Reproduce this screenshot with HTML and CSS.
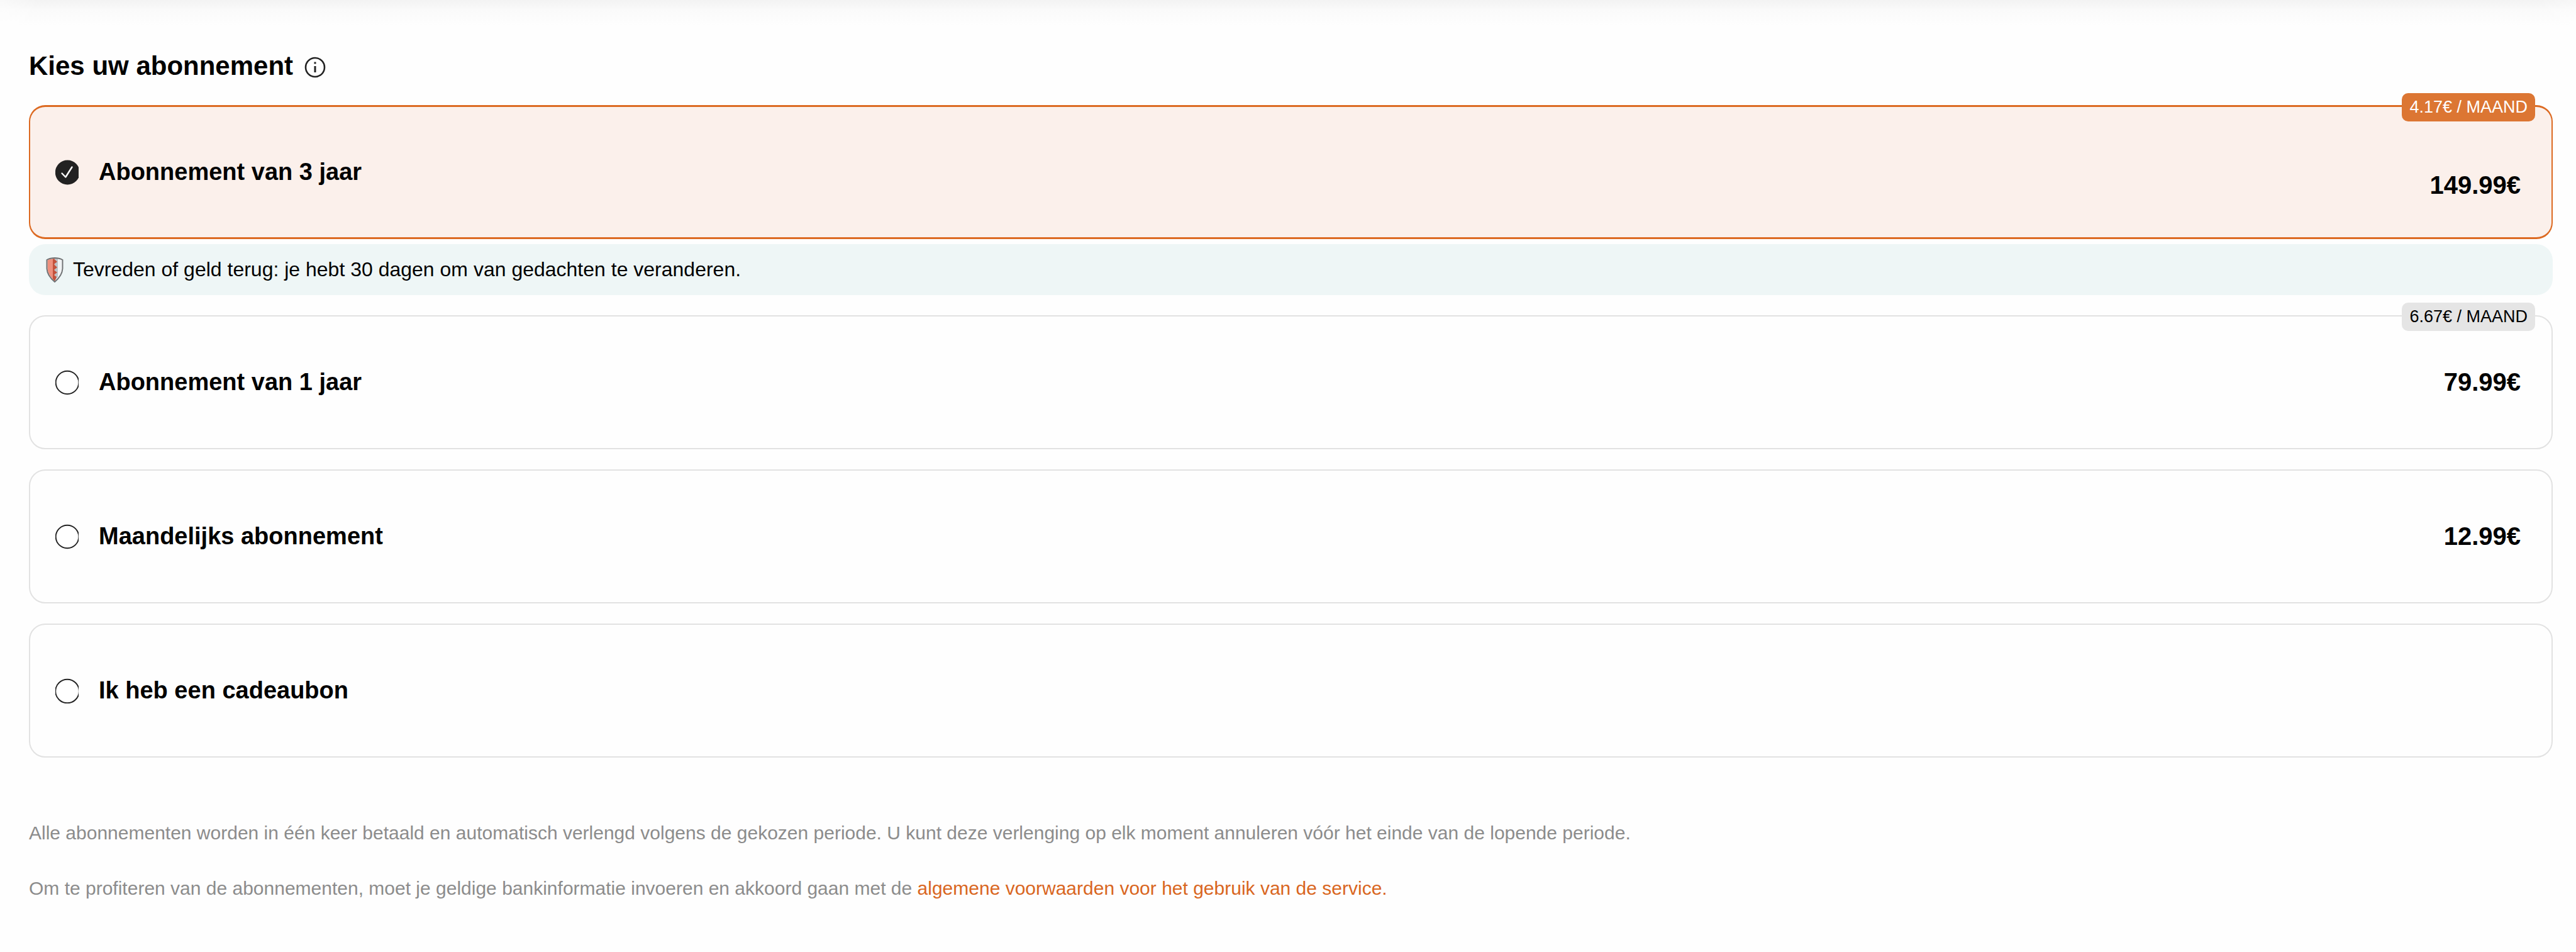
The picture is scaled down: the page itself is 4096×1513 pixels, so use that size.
FILE: index.html
```html
<!DOCTYPE html>
<html lang="nl">
<head>
<meta charset="utf-8">
<meta name="viewport" content="width=device-width, initial-scale=1">
<title>Kies uw abonnement</title>
<link rel="stylesheet" href="styles.css">
</head>
<body>
<div class="header-shadow"></div>
<main class="page">
  <div class="heading">
    <h1 class="heading-title">Kies uw abonnement</h1>
    <button class="info" type="button" aria-label="Meer informatie">
      <svg class="info-icon" viewBox="0 0 34 34" aria-hidden="true"><circle cx="17" cy="17" r="15" fill="none" stroke="#222" stroke-width="2.6"/><path d="M17 15v10" stroke="#222" stroke-width="3"/><path d="M17 8.500v3" stroke="#222" stroke-width="3"/></svg>
    </button>
  </div>

  <form class="plans">
    <div class="plan-group">
      <label class="plan plan-selected">
        <span class="radio"><input class="radio-input" type="radio" name="plan" checked><svg class="radio-icon" viewBox="0 0 37 40" aria-hidden="true"><circle cx="19.300" cy="20" r="19.500" fill="#222"/><path d="M10.500 21.500l5.800 6L26.500 11.500" fill="none" stroke="#fff" stroke-width="2.400" stroke-linecap="round" stroke-linejoin="round"/></svg></span>
        <span class="plan-name">Abonnement van 3 jaar</span>
        <span class="price price-low">149.99€</span>
        <span class="badge badge-accent">4.17€ / MAAND</span>
      </label>
      <p class="note">
        <svg class="shield" viewBox="0 0 28 40" aria-hidden="true"><path d="M14 1C18 1 23 2 26.500 4V18C26 27 20 34 14 39C8 34 2 27 1.500 18V4C5 2 10 1 14 1Z" fill="#f1f3f4"/><path d="M14 2H19V31L14 37Z" fill="#bcc2c6"/><path d="M14 2C9 2 5 3 2.500 4.500V18C3 26 8 32 14 37.500Z" fill="#ee8f7c"/><path d="M11 2.500H13L18 7L12.500 11L18 16L12.500 20L18 24L12.500 28L17 31L14 38L11 34Z" fill="#c4513b"/><path d="M14 1C18 1 23 2 26.500 4V18C26 27 20 34 14 39C8 34 2 27 1.500 18V4C5 2 10 1 14 1Z" fill="none" stroke="#6e7072" stroke-width="1.900"/></svg>
        <span>Tevreden of geld terug: je hebt 30 dagen om van gedachten te veranderen.</span>
      </p>
    </div>
    <label class="plan">
      <span class="radio"><input class="radio-input" type="radio" name="plan"><svg class="radio-icon" viewBox="0 0 37 40" aria-hidden="true"><circle cx="19" cy="20" r="18.300" fill="#fff" stroke="#222" stroke-width="1.900"/></svg></span>
      <span class="plan-name">Abonnement van 1 jaar</span>
      <span class="price">79.99€</span>
      <span class="badge">6.67€ / MAAND</span>
    </label>
    <label class="plan">
      <span class="radio"><input class="radio-input" type="radio" name="plan"><svg class="radio-icon" viewBox="0 0 37 40" aria-hidden="true"><circle cx="19" cy="20" r="18.300" fill="#fff" stroke="#222" stroke-width="1.900"/></svg></span>
      <span class="plan-name">Maandelijks abonnement</span>
      <span class="price">12.99€</span>
    </label>
    <label class="plan">
      <span class="radio"><input class="radio-input" type="radio" name="plan"><svg class="radio-icon" viewBox="0 0 37 40" aria-hidden="true"><circle cx="19" cy="20.500" r="18.800" fill="#fff" stroke="#222" stroke-width="1.900"/></svg></span>
      <span class="plan-name">Ik heb een cadeaubon</span>
    </label>
  </form>

  <footer class="legal">
    <p class="legal-text">Alle abonnementen worden in één keer betaald en automatisch verlengd volgens de gekozen periode. U kunt deze verlenging op elk moment annuleren vóór het einde van de lopende periode.</p>
    <p class="legal-text">Om te profiteren van de abonnementen, moet je geldige bankinformatie invoeren en akkoord gaan met de <a class="legal-link" href="#voorwaarden">algemene voorwaarden voor het gebruik van de service.</a></p>
  </footer>
</main>
</body>
</html>
```
FILE: styles.css
```css
* { box-sizing: border-box; }

body {
  margin: 0;
  background: #fefefe;
  color: #000;
  font-family: "Liberation Sans", Arial, Helvetica, sans-serif;
}

.header-shadow {
  height: 40px;
  background: linear-gradient(#f3f3f3, #fafafa 40%, #fefefe);
  mask-image: linear-gradient(to right, rgb(0 0 0 / 50%), #000 60px, #000 calc(100% - 60px), rgb(0 0 0 / 70%));
}

.page { padding: 35px 37px 60px 46px; }

.heading {
  display: flex;
  align-items: center;
  gap: 18px;
  height: 60px;
}

.heading-title {
  margin: 0;
  font-size: 42px;
  line-height: 60px;
}

.info {
  display: flex;
  padding: 4px 0 0;
  border: 0;
  background: none;
}

.info-icon { width: 34px; height: 34px; }

.plans {
  display: flex;
  flex-direction: column;
  gap: 32px;
  margin-top: 32px;
}

.plan-group {
  display: flex;
  flex-direction: column;
  gap: 8px;
}

.plan {
  position: relative;
  display: flex;
  align-items: center;
  gap: 32px;
  min-height: 213px;
  padding: 0 49px 0 40px;
  border: 2px solid #e2e2e2;
  border-radius: 26px;
}

.plan-selected {
  border-width: 3px 2px;
  border-color: #dc6a22;
  background: #fbf0eb;
}

.radio { display: grid; }

.radio-input,
.radio-icon {
  grid-area: 1 / 1;
  width: 37px;
  height: 40px;
  margin: 0;
}

.radio-input { appearance: none; }

.plan-name {
  flex: 1;
  font-size: 38px;
  font-weight: bold;
}

.price {
  font-size: 40px;
  font-weight: bold;
}

.price-low { padding-top: 42px; }

.badge {
  position: absolute;
  top: -22px;
  right: 26px;
  padding: 0 12px;
  border-radius: 10px;
  background: #e5e5e5;
  font-size: 27px;
  line-height: 45px;
}

.badge-accent {
  background: #dc7633;
  color: #fff;
}

.note {
  display: flex;
  align-items: center;
  gap: 15px;
  min-height: 81px;
  margin: 0;
  padding: 0 27px;
  border-radius: 26px;
  background: #eef6f6;
  font-size: 32px;
}

.shield { width: 28px; height: 40px; }

.legal {
  display: flex;
  flex-direction: column;
  gap: 48px;
  margin-top: 100px;
}

.legal-text {
  margin: 0;
  color: #8c8c8c;
  font-size: 30px;
  line-height: 40px;
}

.legal-link {
  color: #d9661f;
  text-decoration: none;
}
```
